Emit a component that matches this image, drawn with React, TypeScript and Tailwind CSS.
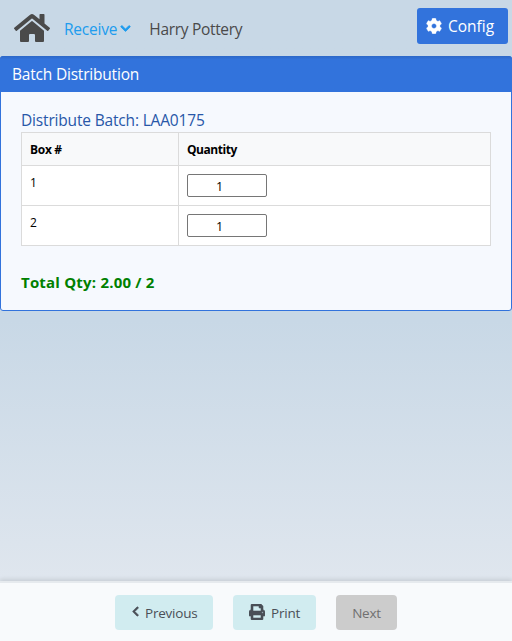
import React, { useState } from 'react';
import { FaChevronDown, FaChevronLeft, FaCog, FaHome, FaPrint } from 'react-icons/fa';

const boxes = [1, 2];

function Navbar() {
  return (
    <nav className="flex h-14 shrink-0 items-start">
      <FaHome className="ml-3.5 mt-[10px] size-9 text-[#4a4a4a]" />
      <a className="ml-[14px] mt-[17px] flex items-center text-[15.5px] leading-6 tracking-[-0.2px] text-[#209cee]">
        Receive
        <FaChevronDown className="mb-[2px] ml-[3px] size-[11px] overflow-visible" strokeWidth={40} />
      </a>
      <span className="ml-[18px] mt-[17px] text-[15.5px] leading-6 tracking-[-0.32px] text-[#4a4a4a]">Harry Pottery</span>
      <button className="ml-auto mr-1 mt-2 flex h-9 w-[91px] items-center rounded-[3px] bg-[#3273dc] pl-[9px] text-[15.5px] text-white">
        <FaCog className="size-4" strokeWidth={12} />
        <span className="ml-[6px] pt-[2px]">Config</span>
      </button>
    </nav>
  );
}

function QuantityInput() {
  const [value, setValue] = useState('1');
  return (
    <input
      className="block h-[23px] w-20 rounded-[2px] border border-[#767676] bg-white pt-[2px] pr-[15px] text-center text-[12.5px] text-black"
      value={value}
      onChange={(e) => setValue(e.target.value)}
    />
  );
}

export default function App() {
  return (
    <div className="flex h-[641px] w-[512px] flex-col overflow-hidden bg-linear-to-b from-[#c8d8e6] from-50% to-[#dfe6ee] to-90% font-['Open_Sans','Noto_Sans',sans-serif]">
      <Navbar />
      <section className="h-[255px] shrink-0 rounded-[3px] border border-[#3273dc] bg-[#f6f9fe]">
        <h1 className="-mx-px -mt-px flex h-9 items-center rounded-t-[3px] bg-linear-to-b from-[#2d68c8] to-[#3273dc] to-10% pl-3 pt-[2px] text-[15.5px] tracking-[-0.2px] text-white">
          Batch Distribution
        </h1>
        <div className="px-5 pt-4">
          <h2 className="h-6 text-[15.5px] leading-[25px] tracking-[-0.17px] text-[#2857a8]">Distribute Batch: LAA0175</h2>
          <table className="w-[470px] table-fixed border-collapse bg-white text-left text-xs text-black">
            <thead>
              <tr className="h-[33px] bg-[#f8f9fa]">
                <th className="w-[157px] border border-[#dbdbdb] px-2 pt-[2px] tracking-[-0.3px]">Box #</th>
                <th className="border border-[#dbdbdb] px-2 pt-[2px] tracking-[-0.45px]">Quantity</th>
              </tr>
            </thead>
            <tbody>
              {boxes.map((box) => (
                <tr key={box} className="h-10 align-top">
                  <td className="border border-[#dbdbdb] px-2 pt-[9px]">{box}</td>
                  <td className="border border-[#dbdbdb] px-2 pt-2">
                    <QuantityInput />
                  </td>
                </tr>
              ))}
            </tbody>
          </table>
          <p className="mt-6 text-[15px] font-bold leading-6 tracking-[0.2px] text-[#008000]">Total Qty: 2.00 / 2</p>
        </div>
      </section>
      <footer className="mt-auto flex h-[60px] shrink-0 items-start justify-center gap-5 border-t-2 border-[#e6eaee] bg-[#f8fafc] pt-3 text-[13.5px] tracking-[-0.22px] text-[#4a4f57] shadow-[0_-2px_4px_rgba(0,0,0,0.1)]">
        <button className="flex h-[35px] w-[98px] items-center rounded-[4px] bg-[#d1ecf0] pl-[15px]">
          <FaChevronLeft className="mb-[2px] size-[11px] overflow-visible" strokeWidth={30} />
          <span className="ml-1 pt-px">Previous</span>
        </button>
        <button className="flex h-[35px] w-[83px] items-center rounded-[4px] bg-[#d1ecf0] pl-4">
          <FaPrint className="mb-px size-4" strokeWidth={18} />
          <span className="ml-[6px] pt-px">Print</span>
        </button>
        <button className="h-[35px] w-[61px] rounded-[4px] bg-[#cccccc] pt-px text-[#707070]">Next</button>
      </footer>
    </div>
  );
}
